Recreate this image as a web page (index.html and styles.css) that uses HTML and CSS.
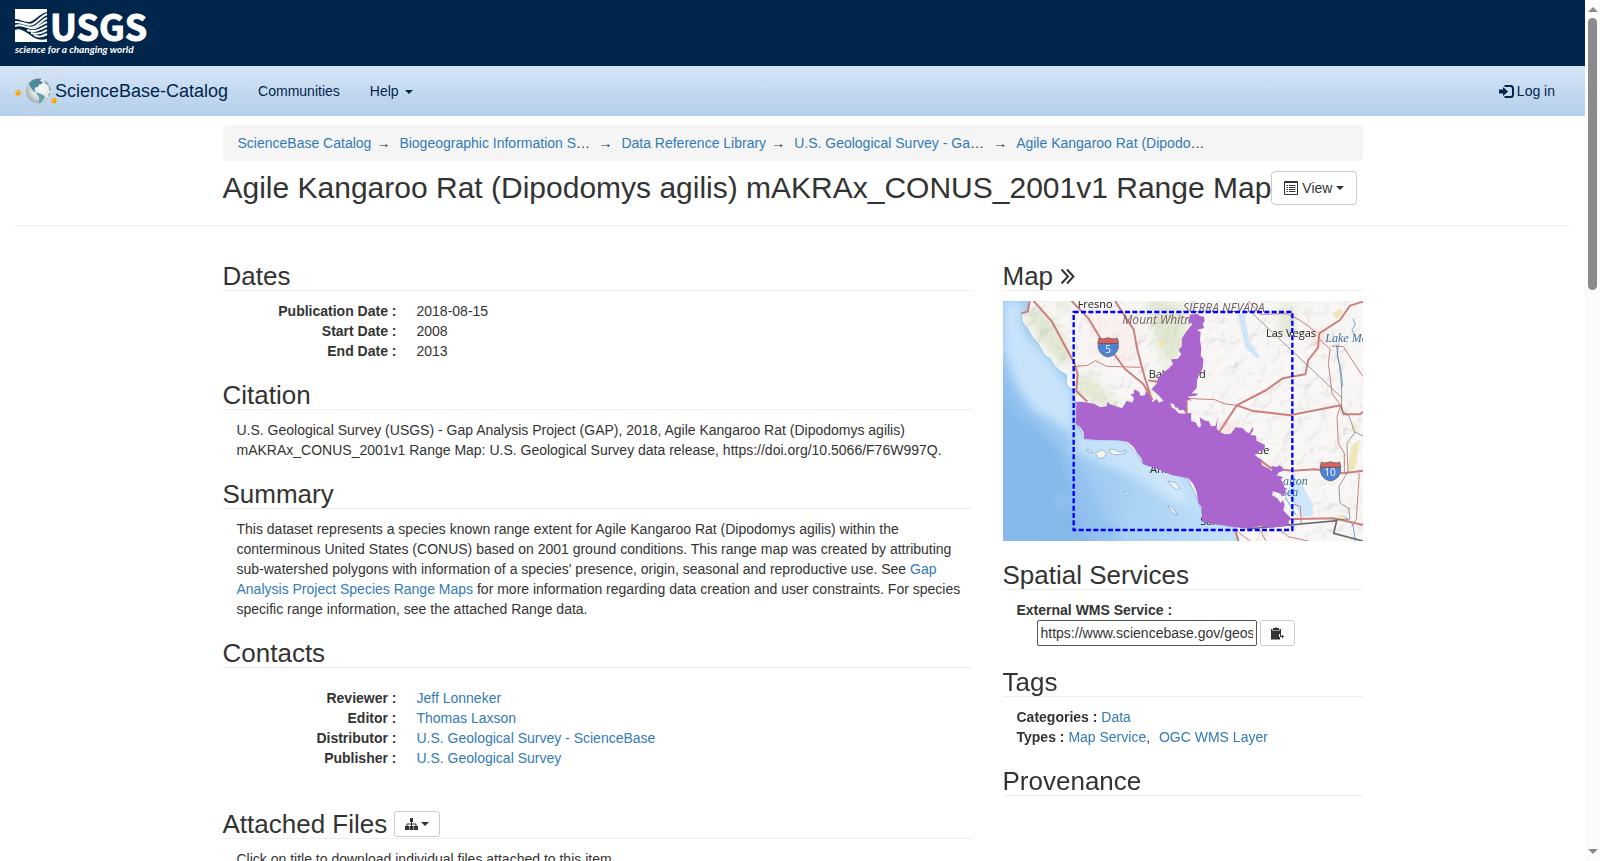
FILE: index.html
```html
<!DOCTYPE html>
<html lang="en">
<head>
<meta charset="utf-8">
<title>Agile Kangaroo Rat (Dipodomys agilis) mAKRAx_CONUS_2001v1 Range Map - ScienceBase-Catalog</title>
<link rel="stylesheet" href="styles.css">
</head>
<body>
<div class="viewport">
<div class="page">
  <header class="banner">
    <a class="usgs" href="#" aria-label="USGS home">
      <svg width="128" height="50" viewBox="0 0 128 50" aria-hidden="true">
        <path fill="#fff" d="M0 1H32V4C23 6 20 14 13 14C8 14 5 11 0 11Z"/>
        <path fill="#fff" d="M0 22C5 20 9 23 15 27C20 31 26 33 32 31V34H0Z"/>
        <g fill="none" stroke="#fff" stroke-width="2">
          <path d="M0 14C8 13 12 19 18 16C24 13 26 8 32 6"/>
          <path d="M0 18C8 15 13 22 19 19C24 17 27 12 32 10"/>
          <path d="M13 19C19 23 25 17 32 14"/>
          <path d="M12 22C19 25 26 21 32 18"/>
          <path d="M16 25C22 27 27 25 32 22"/>
          <path d="M19 27C24 30 28 28 32 26"/>
        </g>
        <text class="usgs-name" x="35" y="33">USGS</text>
        <text class="usgs-tag" x="0" y="45">science for a changing world</text>
      </svg>
    </a>
  </header>

  <nav class="navbar">
    <a class="brand" href="#">
      <svg width="46" height="46" viewBox="44 204 138 138" aria-hidden="true">
        <defs><radialGradient id="globe" cx="60%" cy="40%" r="65%"><stop offset="0" stop-color="#f8fbfb"/><stop offset=".6" stop-color="#dfe4e5"/><stop offset="1" stop-color="#9ea8ac"/></radialGradient></defs>
        <path d="M58 262C74 232 110 205 145 207C166 209 175 220 177 238M68 326C84 342 130 344 158 309" fill="none" stroke="#d3d9df" stroke-width="3"/>
        <circle cx="115" cy="272" r="38" fill="url(#globe)"/>
        <path fill="#4d8b97" d="M86 249C94 238 110 233 124 236L119 242L128 247L124 252L115 254L113 262L106 261L102 269L108 278L98 272L91 263Z"/>
        <path fill="#5fa0a9" d="M107 279L118 280L132 287L134 293L127 299L121 309L115 308L117 293Z"/>
        <path fill="#6fa9ae" d="M130 239C143 245 152 260 152 273L147 270L145 256L136 252ZM144 281L150 279L146 291Z"/>
        <circle cx="53" cy="279" r="8" fill="#f6a400"/><circle cx="51" cy="276" r="3" fill="#ffd253"/>
        <circle cx="161" cy="302" r="8" fill="#f6a400"/><circle cx="159" cy="299" r="3" fill="#ffd253"/>
      </svg>
      <span class="brand-name">ScienceBase-Catalog</span>
    </a>
    <a class="nav-link" href="#">Communities</a>
    <a class="nav-link" href="#">Help <span class="caret"></span></a>
    <a class="nav-link login" href="#">
      <svg width="15" height="13" viewBox="0 0 15 13" aria-hidden="true"><path fill="currentColor" d="M0 4.500H4V2L9 6.500L4 11V8.500H0Z"/><path d="M5.500 1H11.500C13 1 14 2 14 3.500V9.500C14 11 13 12 11.500 12H5.500" fill="none" stroke="currentColor" stroke-width="2"/></svg>
      <span>Log in</span>
    </a>
  </nav>

  <div class="fluid">
    <header class="item-header">
      <div class="container">
        <ol class="breadcrumb">
          <li><a href="#">ScienceBase Catalog</a></li>
          <li><span class="crumb"><a href="#">Biogeographic Information System</a></span></li>
          <li><span class="crumb"><a href="#">Data Reference Library</a></span></li>
          <li><span class="crumb"><a href="#">U.S. Geological Survey - Gap Analysis Project</a></span></li>
          <li><span class="crumb"><a href="#">Agile Kangaroo Rat (Dipodomys agilis)</a></span></li>
        </ol>
        <div class="title-row">
          <h1>Agile Kangaroo Rat (Dipodomys agilis) mAKRAx_CONUS_2001v1 Range Map</h1>
          <button class="btn btn-view" type="button">
            <svg width="14" height="14" viewBox="0 0 14 14" aria-hidden="true"><path d="M.5 .5H13.500V13.500H.5ZM.5 1.500H13.500" fill="none" stroke="#333"/><path d="M2.500 4.500H4M5 4.500H11.500M2.500 6.500H4M5 6.500H11.500M2.500 8.500H4M5 8.500H11.500M2.500 10.500H4M5 10.500H11.500" stroke="#333"/></svg>
            <span>View</span>
            <span class="caret"></span>
          </button>
        </div>
      </div>
    </header>

    <main class="container columns">
      <div class="col">
        <h2>Dates</h2>
        <dl class="facts">
          <dt>Publication Date :</dt><dd>2018-08-15</dd>
          <dt>Start Date :</dt><dd>2008</dd>
          <dt>End Date :</dt><dd>2013</dd>
        </dl>
        <h2>Citation</h2>
        <p class="body">U.S. Geological Survey (USGS) - Gap Analysis Project (GAP), 2018, Agile Kangaroo Rat (Dipodomys agilis) mAKRAx_CONUS_2001v1 Range Map: U.S. Geological Survey data release, https://doi.org/10.5066/F76W997Q.</p>
        <h2>Summary</h2>
        <p class="body">This dataset represents a species known range extent for Agile Kangaroo Rat (Dipodomys agilis) within the conterminous United States (CONUS) based on 2001 ground conditions. This range map was created by attributing sub-watershed polygons with information of a species' presence, origin, seasonal and reproductive use. See <a href="#">Gap Analysis Project Species Range Maps</a> for more information regarding data creation and user constraints. For species specific range information, see the attached Range data.</p>
        <h2>Contacts</h2>
        <dl class="facts contacts">
          <dt>Reviewer :</dt><dd><a href="#">Jeff Lonneker</a></dd>
          <dt>Editor :</dt><dd><a href="#">Thomas Laxson</a></dd>
          <dt>Distributor :</dt><dd><a href="#">U.S. Geological Survey - ScienceBase</a></dd>
          <dt>Publisher :</dt><dd><a href="#">U.S. Geological Survey</a></dd>
        </dl>
        <h2 class="files">Attached Files
          <button class="btn btn-small" type="button" aria-label="File options">
            <svg width="13" height="12" viewBox="0 0 13 12" aria-hidden="true"><path fill="#333" d="M5 0H8V4H5ZM0 8H4V12H0ZM4.500 8H8.500V12H4.500ZM9 8H13V12H9Z"/><path d="M6.500 3V9M2 9V6H11V9" fill="none" stroke="#333"/></svg>
            <span class="caret"></span>
          </button>
        </h2>
        <p class="body">Click on title to download individual files attached to this item.</p>
      </div>

      <aside class="col">
        <h2>Map <svg width="15" height="17" viewBox="0 0 15 17" aria-hidden="true"><path d="M1.500 1.500L8 8.500L1.500 15.500M7 1.500L13.500 8.500L7 15.500" fill="none" stroke="#333" stroke-width="2"/></svg></h2>
        <svg class="map" viewBox="39 153 1080 720" role="img" aria-label="Range map of southern California">
          <defs>
            <linearGradient id="sea" x1="0" y1=".5" x2="1" y2=".3"><stop offset="0" stop-color="#8fbfee"/><stop offset=".25" stop-color="#a4cff4"/><stop offset=".5" stop-color="#c4e1fa"/><stop offset="1" stop-color="#cbe6fc"/></linearGradient>
            <filter id="soft" x="-20%" y="-20%" width="140%" height="140%"><feGaussianBlur stdDeviation="14"/></filter>
            <filter id="relief" x="0" y="0" width="100%" height="100%">
              <feTurbulence type="fractalNoise" baseFrequency=".022" numOctaves="4" seed="8"/>
              <feDiffuseLighting lighting-color="#fff" surfaceScale="14" diffuseConstant="1.2"><feDistantLight azimuth="225" elevation="62"/></feDiffuseLighting>
              <feComposite in2="SourceGraphic" operator="in"/>
            </filter>
            <clipPath id="frame"><rect x="39" y="153" width="1080" height="720"/></clipPath>
            <path id="land" d="M104 140L118 170L113 188L93 191L96 215L113 238L127 262L146 285L165 318L181 327L190 345L210 364L230 375L228 400L237 414L249 417L256 455L262 520L283 569L400 570L440 610L458 642L520 660L590 682L615 730L634 780L640 815L735 833L752 890H1135V140Z"/>
          </defs>
          <g clip-path="url(#frame)">
            <rect x="39" y="153" width="1080" height="720" fill="url(#sea)"/>
            <g filter="url(#soft)">
              <path fill="#c8e3fa" d="M39 153H100L100 240L180 330L250 430L250 560L200 520L130 480L80 410L39 290Z"/>
              <path fill="#86b9ea" d="M39 430L80 500L150 540L215 610L245 700L290 770L340 900H20V430Z"/>
              <path fill="#93c1ef" d="M245 610L300 700L330 790L400 873H300L250 770Z"/>
              <path fill="#dceefb" d="M250 540L430 570L580 700L610 770L540 750L430 680L330 640L250 600Z" opacity=".6"/>
              <path fill="#aed4f5" d="M400 710L470 830L560 873H390Z" opacity=".7"/>
              <path fill="#acd0f3" d="M203 773L218 735L230 735L220 765Z"/>
            </g>
            <use href="#land" fill="#f8f7f5"/>
            <g filter="url(#soft)" opacity=".85">
              <path fill="#dde5cb" d="M125 170L180 200L240 290L240 360L180 310L110 210ZM185 153H240L240 190ZM258 380L300 380L390 470L330 470L260 420ZM465 153H560L590 210L575 310L530 350L500 270ZM865 165H910V250H870ZM540 345L490 430L540 440L580 380Z"/>
              <path fill="#faf1f0" d="M290 190H430L440 340L300 320Z"/>
              <path fill="#f8d9d5" d="M970 240H1005V290H970ZM690 520H730V550H690Z"/>
            </g>
            <use href="#land" fill="#fff" filter="url(#relief)" class="relief"/>
            <g fill="#efe7b8"><path d="M510 270L527 277L530 289L514 293L503 281ZM1028 190L1050 176L1060 188L1038 208Z"/><path d="M1085 585L1110 569L1096 655L1071 668ZM1088 512L1103 535L1087 544ZM1043 795H1065L1057 812L1043 806Z"/></g>
            <path fill="#cde6fa" d="M744 190H762L779 278L811 322L800 325L765 292ZM908 680L940 710L970 765L964 798H935L908 760L890 730Z"/>
            <use href="#land" fill="none" stroke="#72aef0" stroke-width="2"/>
            <g fill="#f8f6ec" stroke="#739fe0" stroke-width="2"><path d="M290 599L304 601L309 608L297 607ZM316 609L337 600L350 610L342 622L326 626ZM359 598L373 598L389 607L407 600L408 607L391 614H370L358 607ZM533 693L557 698L571 716L562 719L548 711ZM402 725L419 729L416 735L405 732ZM533 765L548 774L565 797L548 789Z"/></g>
            <g fill="none" stroke="#6ba5e8" stroke-width="3"><path d="M1090 207L1096 225L1086 238L1095 260M1045 280L1042 320L1052 352L1058 410M886 742L918 795M1065 800L1089 825L1096 873"/></g>
            <g fill="none" stroke="#cb8080" stroke-linejoin="round">
              <g stroke-width="6"><path d="M94 190L113 184L119 153M131 153L186 215L210 260L253 340L263 373L259 423L292 455M245 153L295 205L331 265L378 320L405 357L459 401L488 450M375 153L431 239L442 300L464 382L486 450M475 391L510 397M590 450V490M684 552L740 466L829 420L878 385L946 373L955 330L984 293L988 250L1050 210L1080 167L1119 155M740 466L786 482L900 496L1052 466L1060 493L1110 493L1119 485M805 626L843 655L907 662L976 658L1060 670L1119 662M885 808L1031 805L1119 825M735 840L745 873"/></g>
              <g stroke-width="3"><path d="M246 350L293 346L316 332L350 349L452 352M587 445L674 449L706 462L740 466M775 153L811 193L889 191L929 210L980 247M988 268L1020 297L1015 340L1026 430L1052 466M1025 288L1060 290L1119 380M1052 466L1041 500L1045 580L1063 610V670M912 762L931 770L934 820M1108 670L1099 808L1085 830M740 843L780 873M810 840L828 873M865 836L895 860L955 873"/></g>
            </g>
            <g fill="none" stroke="#696969"><path d="M785 188L1056 444" stroke-width="2"/><path d="M1039 285L1052 375L1055 420L1055 480L1078 500L1093 545L1119 558M1096 545L1071 580L1074 665L1047 709L1050 759L1076 775L1080 807L1031 810" stroke-width="2"/><path d="M770 837L1040 812L1031 850L1119 873" stroke-width="5"/></g>

            <g class="map-label">
              <text x="263" y="173">Fresno</text><text x="476" y="383">Bakersfield</text><text x="828" y="260">Las Vegas</text><text x="480" y="668">Anaheim</text><text x="698" y="613">Riverside</text><text x="631" y="826">San Diego</text>
            </g>
            <g class="map-range"><text x="579" y="187">SIERRA NEVADA</text><text x="397" y="222">Mount Whitney</text></g>
            <g class="map-water"><text x="1006" y="275">Lake Mead</text><text x="861" y="706">Salton</text><text x="873" y="738">Sea</text></g>

            <path fill="#aa66ce" d="M600 194L622 191L630 198L642 200L644 213L638 222L643 234L621 240L632 246L630 270L634 294L632 318L640 326L638 356L630 370L622 383L620 414L605 430L625 431L617 437L594 440L604 452L590 449L587 490L603 489L604 514L616 516L626 533L633 528L629 502L645 512L656 513L663 529L677 527L683 504L680 536L690 546L704 553L722 551L737 532L757 534L770 547L778 550L788 531L790 541L781 555L798 557L800 572L825 585L823 600L808 603L801 613L793 613L804 623L812 628L816 646L834 655L846 663L844 648L863 651L866 646L878 652L880 662L865 668L861 677L875 679L873 690L878 700L887 719L882 737L866 729L849 724L846 736L862 745L872 759L878 751L884 763L880 781L893 795L902 803L895 816L901 826L840 834L810 829L775 836L730 831L637 815L634 770L625 759L620 725L610 702L595 685L545 675L510 660L459 642L455 626L442 609L430 590L412 575L380 570L323 570L283 566L280 545L270 530L258 523L259 455L280 456L312 461L331 472L350 469L352 457L364 464L396 475L410 452L427 458L432 445L421 432L432 431V418L447 425L452 438L466 435L467 423L478 435L488 457L500 446L507 458L520 452L508 438L485 417L501 400L504 383L522 365L535 357L549 342L543 328L563 327L574 313L566 300L576 288L575 267L588 246L607 222L594 213Z"/>
            <path fill="#f5f4f2" d="M541 460L552 463L555 472L563 473L568 481L582 480L586 491L566 490L554 477L545 472Z"/>
            <rect x="251" y="186" width="656" height="654" fill="none" stroke="#00f" stroke-width="7" stroke-dasharray="15 7"/>
            <g stroke="#555" stroke-width="2">
              <g id="shield"><path fill="#4d82d6" d="M325 280C321 298 333 318 354 321C376 318 389 298 384 280Z"/><path fill="#d9605c" d="M327 264C336 268 345 267 354 263C365 267 374 268 382 264L386 280H323Z"/></g>
              <use href="#shield" x="667" y="372"/>
            </g>
            <g class="map-shield"><text x="354" y="308">5</text><text x="1020" y="679">10</text></g>
          </g>
        </svg>

        <h2>Spatial Services</h2>
        <div class="side-body">
          <label class="strong" for="wms">External WMS Service :</label>
          <div class="wms">
            <input id="wms" type="text" value="https://www.sciencebase.gov/geoserver/GAP/wms">
            <button class="btn btn-small" type="button" aria-label="Copy to clipboard"><svg width="13" height="13" viewBox="0 0 13 13" aria-hidden="true"><path fill="#333" d="M0 2H1.500V4H8.500V2H10V7H8V10H9V12.500H0ZM2 1H4L5 0L6 1H8V3.500H2Z"/><path fill="#333" d="M9 7H10V9H11V7.500L13 9.500L11 11.500V10H9Z"/></svg></button>
          </div>
        </div>
        <h2>Tags</h2>
        <div class="side-body">
          <div class="tags"><span class="strong">Categories :</span> <a href="#">Data</a></div>
          <div class="tags"><span class="strong">Types :</span> <span><a href="#">Map Service</a>,</span> <a class="next-tag" href="#">OGC WMS Layer</a></div>
        </div>
        <h2>Provenance</h2>
      </aside>
    </main>
  </div>
</div>
<div class="scrollbar" aria-hidden="true"><span class="arrow-up"></span><span class="thumb"></span><span class="arrow-down"></span></div>
</div>
</body>
</html>
```
FILE: styles.css
```css
*, *::before, *::after { box-sizing: border-box; }

body {
  margin: 0;
  color: #333;
  background: #fff;
  font-family: "Liberation Sans", Arial, sans-serif;
  font-size: 14px;
  line-height: 20px;
}

a { color: #337ab7; text-decoration: none; }
h1, h2, p, ol, dl, dd { margin: 0; padding: 0; font-weight: normal; }
button, input { font: inherit; color: inherit; }

.viewport { display: flex; height: 100vh; overflow: hidden; }
.page { flex: 1; min-width: 0; }

/* Banner and navigation */
.banner { display: flex; height: 66px; padding: 8px 15px; background: #00264c; }
.usgs { display: block; }
.usgs svg { display: block; overflow: visible; }
.usgs-name {
  fill: #fff;
  stroke: #fff;
  stroke-width: 1px;
  font: bold 36px "Noto Sans CJK SC", "Liberation Sans", sans-serif;
}
.usgs-tag { fill: #fff; font: italic bold 10px Lato, "Liberation Sans", sans-serif; }

.navbar {
  display: flex;
  align-items: center;
  height: 50px;
  padding: 0 15px;
  background: linear-gradient(#d5e6f6, #c1d7ef 60%, #b4d0ea);
}
.navbar a { color: #00264c; }
.brand { display: flex; align-items: center; margin-right: 15px; font-size: 18px; }
.brand svg { margin-right: -6px; }
.nav-link { padding: 15px; }
.login { display: flex; align-items: center; gap: 3px; margin-left: auto; }
.caret {
  display: inline-block;
  margin-left: 2px;
  vertical-align: middle;
  border: 4px solid transparent;
  border-top-color: currentColor;
  border-bottom-width: 0;
}

/* Header of the item */
.fluid { padding: 9px 15px; }
.container { width: 100%; max-width: 1140px; margin: 0 auto; }
.item-header { padding-bottom: 20px; border-bottom: 1px solid #eee; }
.breadcrumb {
  display: flex;
  padding: 8px 15px;
  list-style: none;
  background: #f5f5f5;
  border-radius: 4px;
}
.breadcrumb li { display: flex; min-width: 0; }
.breadcrumb li + li::before { content: "→"; padding: 0 9px 0 5px; }
.crumb { max-width: 194px; overflow: hidden; text-overflow: ellipsis; white-space: nowrap; }
.title-row { display: flex; align-items: center; padding-top: 10px; }
h1 { font-size: 30px; line-height: 34px; }

.btn {
  display: inline-flex;
  align-items: center;
  justify-content: center;
  background: #fff;
  border: 1px solid #ccc;
  border-radius: 4px;
}
.btn-view { flex: none; gap: 4px; height: 34px; padding: 0 12px; }
.btn-view .caret, .btn-small .caret { margin-left: 0; }
.btn-small { gap: 3px; height: 26px; padding: 0 10px; border-radius: 3px; }

/* Content */
.columns { display: grid; grid-template-columns: 25fr 12fr; gap: 30px; padding-top: 16px; }
.col { min-width: 0; }
h2 {
  margin: 20px 0 10px;
  font-size: 26px;
  line-height: 28px;
  border-bottom: 1px solid #eee;
}
.facts { display: grid; grid-template-columns: 160px 1fr; column-gap: 20px; padding: 0 14px; }
.facts dt { text-align: right; font-weight: bold; }
.contacts { padding-top: 10px; padding-bottom: 22px; }
.body { padding: 0 12px 0 14px; }
.files { display: flex; align-items: center; gap: 7px; }

.map { display: block; width: 100%; height: auto; }
.map-label { fill: #222; font: 33px "Open Sans", "Noto Sans", sans-serif; }
.map-range { fill: #716265; font: italic 36px "Open Sans", "Noto Sans", sans-serif; }
.map-water { fill: #426f9b; font: italic 36px "Liberation Serif", serif; }
.map-shield { fill: #fff; font: 30px "Open Sans", "Noto Sans", sans-serif; text-anchor: middle; }
.relief { mix-blend-mode: multiply; opacity: .3; }

.side-body { padding: 0 14px; }
.strong { font-weight: bold; }
.side-body label { display: block; }
.wms { display: flex; gap: 3px; padding: 0 0 2px 20px; }
.wms input {
  width: 220px;
  height: 26px;
  padding: 0 3px;
  background: #fff;
  border: 1px solid #555;
  border-radius: 2px;
}
.next-tag { margin-left: 5px; }

/* Scroll bar */
.scrollbar {
  display: flex;
  flex-direction: column;
  align-items: center;
  width: 15px;
  padding: 7px 0;
  background: #fcfcfc;
}
.thumb { width: 9px; height: 272px; margin-top: 6px; background: #8b8b8b; border-radius: 5px; }
.arrow-up, .arrow-down { border: 5px solid transparent; }
.arrow-up { border-top-width: 0; border-bottom-color: #8b8b8b; }
.arrow-down { margin-top: auto; border-bottom-width: 0; border-top-color: #8b8b8b; }
```
